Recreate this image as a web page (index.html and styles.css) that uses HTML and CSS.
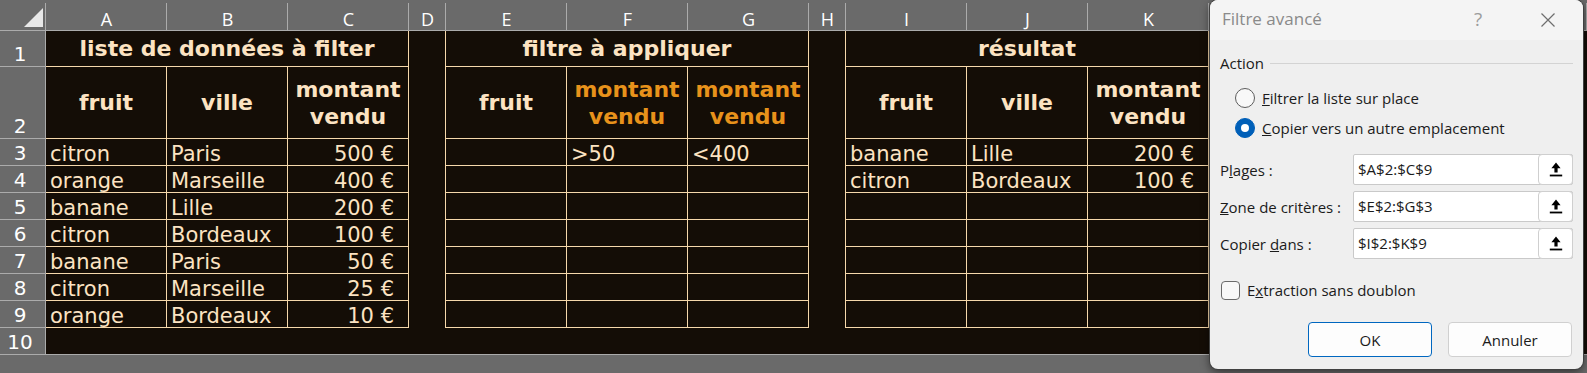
FILE: index.html
```html
<!DOCTYPE html>
<html lang="fr">
<head>
<meta charset="utf-8">
<title>Filtre avancé</title>
<link rel="stylesheet" href="styles.css">
</head>
<body>
<div class="app">
  <div class="sheet">
    <div class="corner"><span class="tri"></span></div>
    <div class="ch">A</div><div class="ch">B</div><div class="ch">C</div><div class="ch">D</div>
    <div class="ch">E</div><div class="ch">F</div><div class="ch">G</div><div class="ch">H</div>
    <div class="ch">I</div><div class="ch">J</div><div class="ch">K</div><div class="ch"></div>

    <div class="rh">1</div>
    <div class="c b h s3">liste de données à filter</div>
    <div class="c g"></div>
    <div class="c b h s3">filtre à appliquer</div>
    <div class="c g"></div>
    <div class="c b h s3">résultat</div>
    <div class="c"></div>

    <div class="rh">2</div>
    <div class="c b h">fruit</div><div class="c b h">ville</div><div class="c b h">montant<br>vendu</div>
    <div class="c g"></div>
    <div class="c b h">fruit</div><div class="c b h o">montant<br>vendu</div><div class="c b h o">montant<br>vendu</div>
    <div class="c g"></div>
    <div class="c b h">fruit</div><div class="c b h">ville</div><div class="c b h">montant<br>vendu</div>
    <div class="c"></div>

    <div class="rh">3</div>
    <div class="c b">citron</div><div class="c b">Paris</div><div class="c b num">500 €</div>
    <div class="c g"></div>
    <div class="c b"></div><div class="c b">&gt;50</div><div class="c b">&lt;400</div>
    <div class="c g"></div>
    <div class="c b">banane</div><div class="c b">Lille</div><div class="c b num">200 €</div>
    <div class="c"></div>

    <div class="rh">4</div>
    <div class="c b">orange</div><div class="c b">Marseille</div><div class="c b num">400 €</div>
    <div class="c g"></div>
    <div class="c b"></div><div class="c b"></div><div class="c b"></div>
    <div class="c g"></div>
    <div class="c b">citron</div><div class="c b">Bordeaux</div><div class="c b num">100 €</div>
    <div class="c"></div>

    <div class="rh">5</div>
    <div class="c b">banane</div><div class="c b">Lille</div><div class="c b num">200 €</div>
    <div class="c g"></div>
    <div class="c b"></div><div class="c b"></div><div class="c b"></div>
    <div class="c g"></div>
    <div class="c b"></div><div class="c b"></div><div class="c b"></div>
    <div class="c"></div>

    <div class="rh">6</div>
    <div class="c b">citron</div><div class="c b">Bordeaux</div><div class="c b num">100 €</div>
    <div class="c g"></div>
    <div class="c b"></div><div class="c b"></div><div class="c b"></div>
    <div class="c g"></div>
    <div class="c b"></div><div class="c b"></div><div class="c b"></div>
    <div class="c"></div>

    <div class="rh">7</div>
    <div class="c b">banane</div><div class="c b">Paris</div><div class="c b num">50 €</div>
    <div class="c g"></div>
    <div class="c b"></div><div class="c b"></div><div class="c b"></div>
    <div class="c g"></div>
    <div class="c b"></div><div class="c b"></div><div class="c b"></div>
    <div class="c"></div>

    <div class="rh">8</div>
    <div class="c b">citron</div><div class="c b">Marseille</div><div class="c b num">25 €</div>
    <div class="c g"></div>
    <div class="c b"></div><div class="c b"></div><div class="c b"></div>
    <div class="c g"></div>
    <div class="c b"></div><div class="c b"></div><div class="c b"></div>
    <div class="c"></div>

    <div class="rh">9</div>
    <div class="c b">orange</div><div class="c b">Bordeaux</div><div class="c b num">10 €</div>
    <div class="c g"></div>
    <div class="c b"></div><div class="c b"></div><div class="c b"></div>
    <div class="c g"></div>
    <div class="c b"></div><div class="c b"></div><div class="c b"></div>
    <div class="c"></div>

    <div class="rh">10</div>
    <div class="c r10"></div><div class="c r10"></div><div class="c r10"></div><div class="c r10"></div>
    <div class="c r10"></div><div class="c r10"></div><div class="c r10"></div><div class="c r10"></div>
    <div class="c r10"></div><div class="c r10"></div><div class="c r10"></div><div class="c r10"></div>
  </div>

  <div class="dlg">
    <div class="tbar">
      <span class="ttl">Filtre avancé</span>
      <span class="help">?</span>
      <span class="close">
        <svg width="16" height="16" viewBox="0 0 16 16"><path d="M1.5 1.5 L14.5 14.5 M14.5 1.5 L1.5 14.5" stroke="#6e6e6e" stroke-width="1.2" fill="none"/></svg>
      </span>
    </div>
    <div class="dbody">
      <div class="act">Action</div>
      <div class="opts">
        <div class="opt"><span class="radio"></span><span><u>F</u>iltrer la liste sur place</span></div>
        <div class="opt"><span class="radio on"></span><span><u>C</u>opier vers un autre emplacement</span></div>
      </div>
      <div class="fields">
        <span>P<u>l</u>ages :</span>
        <div class="fld"><span class="val">$A$2:$C$9</span><span class="up"><svg width="14" height="15" viewBox="0 0 14 15"><path d="M7 0.5 L11.6 6.2 H8.6 V10.6 H5.4 V6.2 H2.4 Z" fill="#000"/><rect x="0.8" y="12.6" width="12.4" height="1.8" fill="#000"/></svg></span></div>
        <span><u>Z</u>one de critères :</span>
        <div class="fld"><span class="val">$E$2:$G$3</span><span class="up"><svg width="14" height="15" viewBox="0 0 14 15"><path d="M7 0.5 L11.6 6.2 H8.6 V10.6 H5.4 V6.2 H2.4 Z" fill="#000"/><rect x="0.8" y="12.6" width="12.4" height="1.8" fill="#000"/></svg></span></div>
        <span>Copier <u>d</u>ans :</span>
        <div class="fld"><span class="val">$I$2:$K$9</span><span class="up"><svg width="14" height="15" viewBox="0 0 14 15"><path d="M7 0.5 L11.6 6.2 H8.6 V10.6 H5.4 V6.2 H2.4 Z" fill="#000"/><rect x="0.8" y="12.6" width="12.4" height="1.8" fill="#000"/></svg></span></div>
      </div>
      <div class="chk"><span class="box"></span><span>E<u>x</u>traction sans doublon</span></div>
      <div class="btns">
        <span class="btn def">OK</span>
        <span class="btn">Annuler</span>
      </div>
    </div>
  </div>
</div>
</body>
</html>
```

FILE: styles.css
```css
* { box-sizing: border-box; }

body {
  margin: 0;
  background: #6a6a6a;
  overflow: hidden;
}

.app {
  position: relative;
  width: 1587px;
  height: 373px;
}

/* ---------- spreadsheet ---------- */
.sheet {
  display: grid;
  grid-template-columns: 46px repeat(3, 121px) 37px repeat(3, 121px) 37px repeat(3, 121px) 1fr;
  grid-template-rows: 31px 36px 72px repeat(8, 27px);
  font-family: "DejaVu Sans", Verdana, sans-serif;
  font-size: 21px;
  color: #fce3c2;
}

.corner {
  background: #6a6a6a linear-gradient(#ababab, #ababab) no-repeat right bottom / 1px 27px;
  border-bottom: 1px solid #ababab;
  display: flex;
  justify-content: flex-end;
  align-items: flex-end;
  padding: 0 3px 3px 0;
}

.tri {
  width: 19px;
  height: 19px;
  background: #e8e8e8;
  clip-path: polygon(100% 0, 100% 100%, 0 100%);
}

.ch {
  background: #6a6a6a linear-gradient(#ababab, #ababab) no-repeat right bottom / 1px 27px;
  border-bottom: 1px solid #ababab;
  display: flex;
  align-items: flex-end;
  justify-content: center;
  padding-bottom: 1px;
  font-family: "Open Sans", "Noto Sans", sans-serif;
  font-size: 18px;
  line-height: 20px;
  color: #ffffff;
}

.rh {
  background: #6a6a6a;
  border-right: 1px solid #ababab;
  border-bottom: 1px solid #ababab;
  display: flex;
  align-items: flex-end;
  justify-content: center;
  padding-right: 5px;
  font-size: 20px;
  line-height: 24px;
  color: #ffffff;
}

.c {
  background: #140d06;
  display: flex;
  align-items: flex-end;
  line-height: 22px;
  padding: 0 4px;
  white-space: nowrap;
}

.b {
  border-right: 1px solid #f6d8ab;
  border-bottom: 1px solid #f6d8ab;
}

.g {
  border-right: 1px solid #f6d8ab;
}

.num {
  justify-content: flex-end;
  padding-right: 14px;
}

.h {
  font-weight: bold;
  font-size: 22px;
  line-height: 27px;
  justify-content: center;
  align-items: center;
  text-align: center;
}

.s3 { grid-column: span 3; }

.o { color: #e8921b; }

.r10 { border-bottom: 1px solid #ababab; }

/* ---------- dialog ---------- */
.dlg {
  position: absolute;
  left: 1210px;
  top: 0;
  width: 373px;
  height: 369px;
  background: #efefef;
  border-radius: 8px;
  overflow: hidden;
  box-shadow: 0 0 0 1px #404040, 0 3px 10px rgba(0, 0, 0, 0.55);
  font-family: "Open Sans", "Noto Sans", sans-serif;
  font-size: 15px;
  color: #1b1b1b;
}

.tbar {
  height: 40px;
  background: #f4f4f4;
  display: flex;
  align-items: center;
  padding: 0 12px 3px 12px;
}

.ttl {
  flex: 1;
  color: #8a8a8a;
  font-size: 17px;
  line-height: 20px;
}

.help {
  width: 40px;
  text-align: center;
  color: #9c9c9c;
  font-size: 19px;
  line-height: 20px;
  margin-right: 27px;
}

.close {
  width: 46px;
  display: flex;
  justify-content: center;
  padding-top: 3px;
}

.dbody {
  padding: 0 10px 12px 10px;
}

.act {
  margin-top: 11px;
  height: 24px;
  display: flex;
  align-items: center;
}

.act::after {
  content: "";
  flex: 1;
  border-top: 1px solid #d3d3d3;
  margin-left: 6px;
}

.opts {
  margin-top: 8px;
  padding-left: 15px;
}

.opt {
  height: 30px;
  display: flex;
  align-items: center;
  gap: 7px;
}

.radio {
  width: 20px;
  height: 20px;
  border-radius: 50%;
  border: 1px solid #5c5c5c;
  background: #f8f8f8;
}

.radio.on {
  background: #005fb8;
  border-color: #005fb8;
  display: flex;
  align-items: center;
  justify-content: center;
}

.radio.on::before {
  content: "";
  width: 8px;
  height: 8px;
  border-radius: 50%;
  background: #ffffff;
}

.fields {
  margin-top: 11px;
  display: grid;
  grid-template-columns: 133px 220px;
  grid-auto-rows: 31px;
  row-gap: 6px;
  align-items: center;
}

.fld {
  height: 31px;
  display: flex;
  background: #ffffff;
  border: 1px solid #c9c9c9;
  border-radius: 2px;
}

.val {
  flex: 1;
  padding-left: 4px;
  line-height: 29px;
}

.up {
  width: 35px;
  margin: -1px -1px -1px 0;
  border: 1px solid #cfcfcf;
  border-radius: 4px;
  background: #ffffff;
  display: flex;
  align-items: center;
  justify-content: center;
}

.chk {
  margin-top: 21px;
  height: 20px;
  display: flex;
  align-items: center;
  gap: 7px;
}

.box {
  width: 19px;
  height: 19px;
  margin-left: 1px;
  border: 1px solid #6a6a6a;
  border-radius: 4px;
  background: #f8f8f8;
}

.btns {
  margin-top: 22px;
  display: flex;
  justify-content: flex-end;
  gap: 16px;
  padding-right: 1px;
}

.btn {
  width: 124px;
  height: 35px;
  border: 1px solid #d0d0d0;
  border-radius: 4px;
  background: #fdfdfd;
  display: flex;
  align-items: center;
  justify-content: center;
}

.btn.def {
  border-color: #0067c0;
}
```
